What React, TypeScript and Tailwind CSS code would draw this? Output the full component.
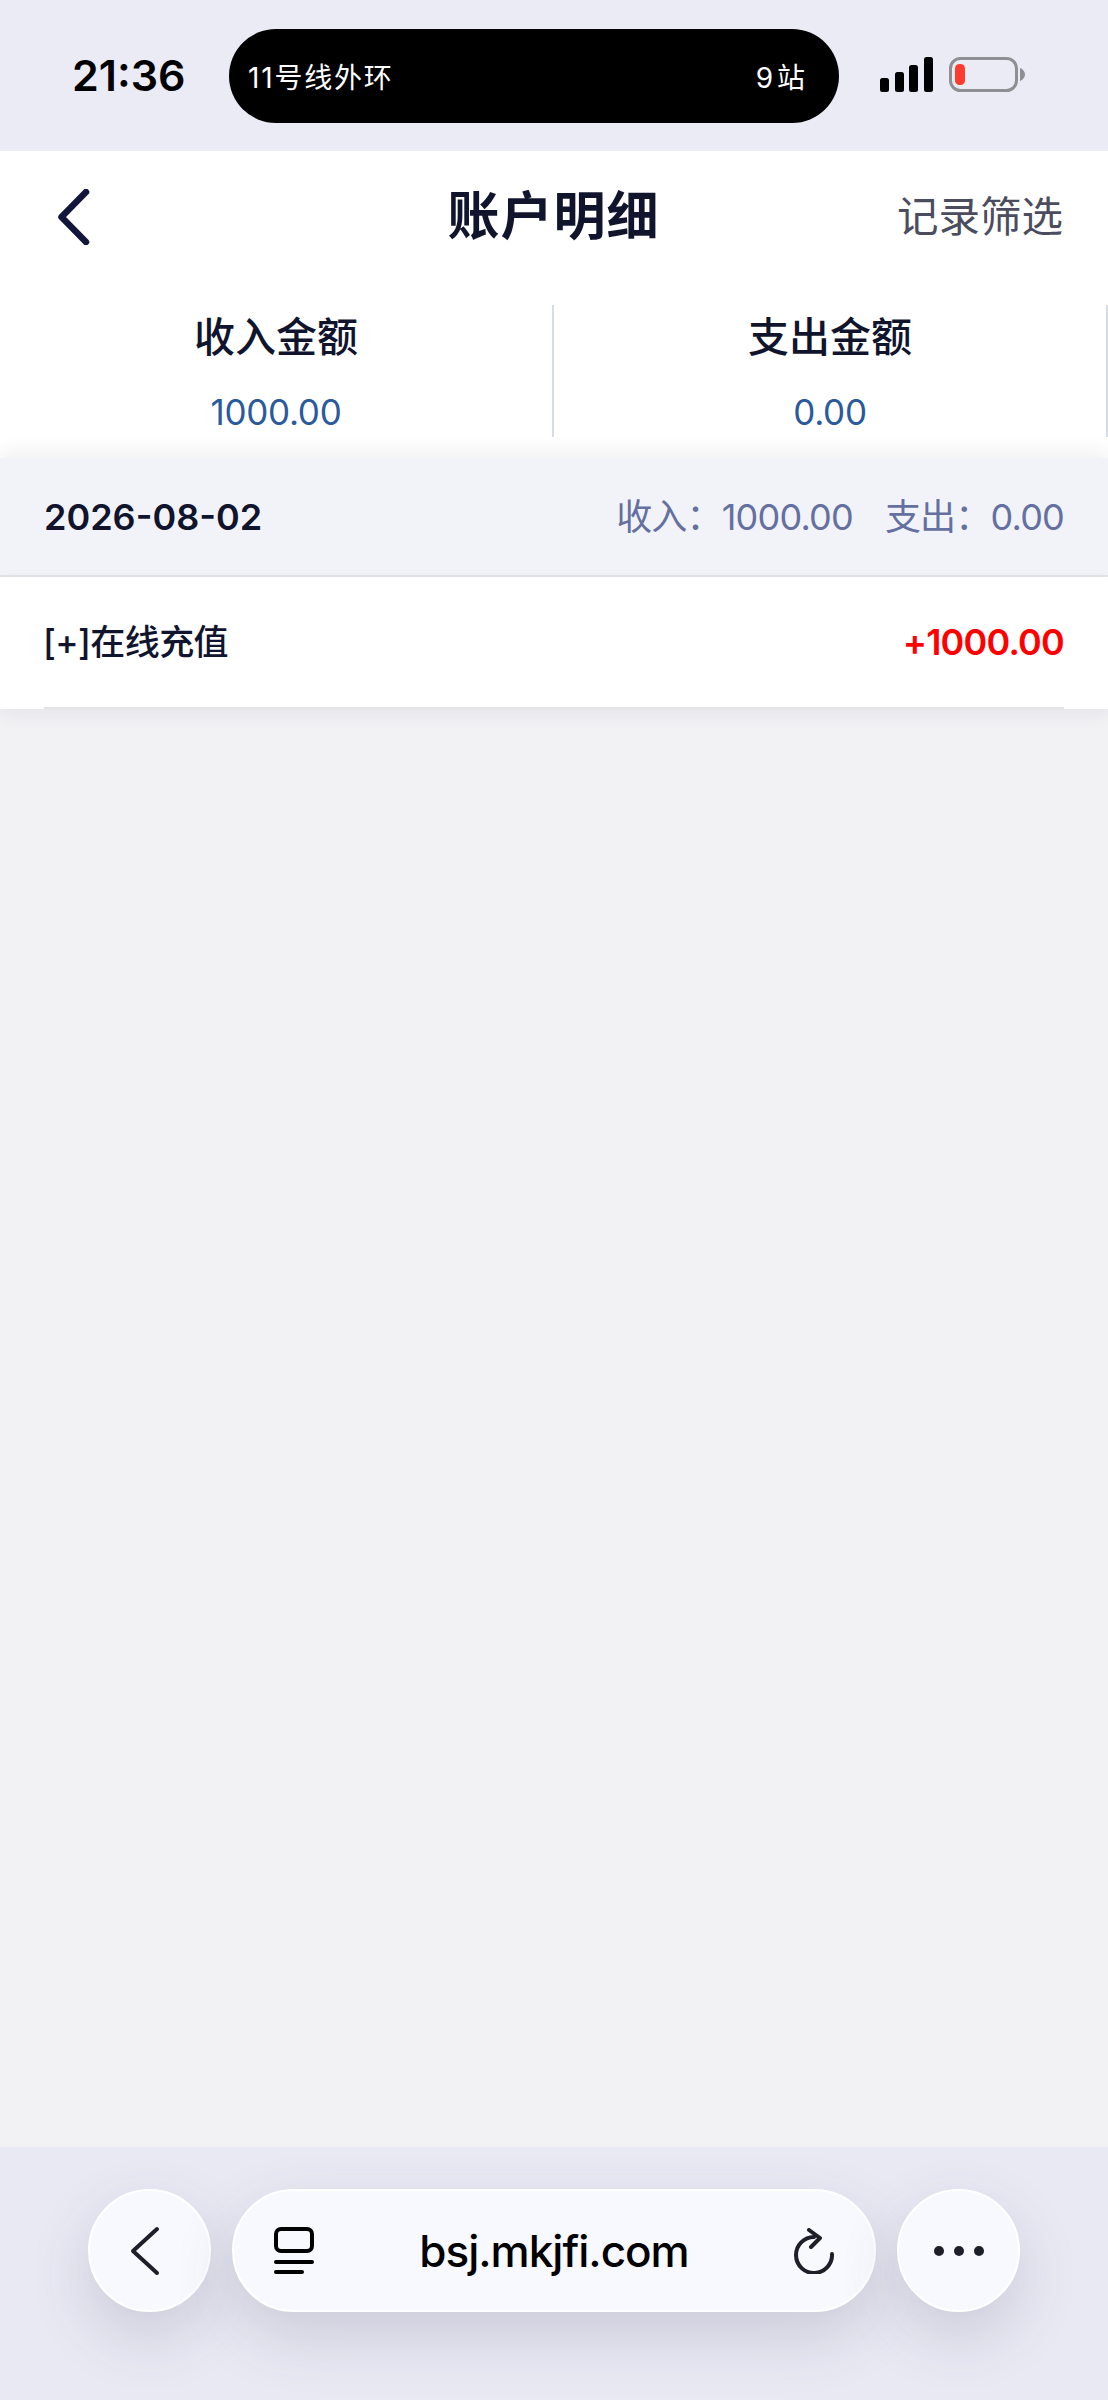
const font = "font-['Inter','Noto_Sans_CJK_SC',sans-serif]";

function StatusBar() {
  return (
    <div className="flex h-[151px] shrink-0 bg-[#eaebf5] pl-[72px] pt-[29px]">
      <span className="mt-[20px] h-[52px] w-[157px] text-[43px] font-semibold leading-[52px] text-black">21:36</span>
      <div className="flex h-[94px] w-[610px] items-center justify-between rounded-full bg-black pl-[19px] pr-[34px] text-[28px] leading-[34px] text-white">
        <span className="mt-[3px] tracking-[1.8px]">11号线外环</span>
        <span className="mt-[3px] [word-spacing:-4px]">9 站</span>
      </div>
      <svg className="ml-[41px] mt-[28px]" width="145" height="36" viewBox="0 0 145 36">
        <rect x="0" y="21" width="9" height="14" rx="2.5" fill="#000" />
        <rect x="15" y="15" width="9" height="20" rx="2.5" fill="#000" />
        <rect x="29" y="8" width="9" height="27" rx="2.5" fill="#000" />
        <rect x="44" y="0" width="9" height="35" rx="2.5" fill="#000" />
        <rect x="70.5" y="1.5" width="66" height="32" rx="10" fill="none" stroke="#8e8e93" strokeWidth="3" />
        <rect x="75" y="7" width="10" height="21" rx="4.5" fill="#ff3b30" />
        <path d="M140 11 C143 12 145 15 145 17.5 C145 20 143 23 140 24 Z" fill="#8e8e93" />
      </svg>
    </div>
  );
}

function Header() {
  return (
    <div className="grid h-[132px] grid-cols-[1fr_auto_1fr] items-center pl-[58px] pr-[45px]">
      <svg width="32" height="56" viewBox="0 0 32 56" fill="none">
        <path d="M28 3 L3.5 28 L28 53" stroke="#12163a" strokeWidth="6.5" strokeLinecap="round" strokeLinejoin="round" />
      </svg>
      <span className="ml-[-15px] mr-[-1px] text-[52px] font-bold leading-[60px] tracking-[1px] text-[#11142d]">账户明细</span>
      <span className="justify-self-end text-[41.5px] leading-[50px] text-[#4b4d5e]">记录筛选</span>
    </div>
  );
}

function Summary({ label, value }: { label: string; value: string }) {
  return (
    <div className="flex h-[132px] flex-col items-center border-r-2 border-[#d5dbe8]">
      <span className="mt-[7px] text-[41px] font-medium leading-[50px] text-[#11142d]">{label}</span>
      <span className="mt-[29px] text-[35px] leading-[42px] tracking-[-0.3px] text-[#2a5a9c]">{value}</span>
    </div>
  );
}

function Toolbar() {
  return (
    <div className="flex h-[253px] shrink-0 justify-center gap-[21px] bg-[#e8e9f3] pt-[42px]">
      <div className="flex h-[123px] w-[123px] items-center justify-center rounded-full border-2 border-white bg-[#f8f9fe] shadow-[0_24px_60px_rgba(70,70,100,0.18)]">
        <svg className="ml-[-9px]" width="30" height="50" viewBox="0 0 30 50" fill="none">
          <path d="M27 3 L3 25 L27 47" stroke="#1d1f2b" strokeWidth="4" strokeLinecap="round" strokeLinejoin="round" />
        </svg>
      </div>
      <div className="flex h-[123px] w-[644px] items-center justify-between rounded-full border-2 border-white bg-[#f8f9fe] pl-[40px] pr-[40px] shadow-[0_24px_60px_rgba(70,70,100,0.18)]">
        <svg width="40" height="48" viewBox="0 0 40 48" fill="none">
          <rect x="2" y="2" width="36" height="22" rx="5" stroke="#000" strokeWidth="4" />
          <path d="M2 35 H38 M2 45 H28" stroke="#000" strokeWidth="4" strokeLinecap="round" />
        </svg>
        <span className="text-[44px] font-medium leading-[54px] tracking-[-1px] text-black">bsj.mkjfi.com</span>
        <svg width="40" height="46" viewBox="0 0 40 46" fill="none">
          <path d="M20 9 A18 18 0 1 0 38 26" stroke="#1d1f2b" strokeWidth="4" strokeLinecap="round" />
          <path d="M15 2 L26 10 L17 19" stroke="#1d1f2b" strokeWidth="4" strokeLinecap="round" strokeLinejoin="round" />
        </svg>
      </div>
      <div className="flex h-[123px] w-[123px] items-center justify-center gap-[10px] rounded-full border-2 border-white bg-[#f8f9fe] shadow-[0_24px_60px_rgba(70,70,100,0.18)]">
        <span className="h-[10px] w-[10px] rounded-full bg-[#1d1f2b]" />
        <span className="h-[10px] w-[10px] rounded-full bg-[#1d1f2b]" />
        <span className="h-[10px] w-[10px] rounded-full bg-[#1d1f2b]" />
      </div>
    </div>
  );
}

export default function App() {
  return (
    <div className={`flex h-[2400px] w-[1108px] flex-col overflow-hidden bg-[#f2f2f5] ${font}`}>
      <StatusBar />
      <div className="bg-white pb-[21px]">
        <Header />
        <div className="mt-[22px] grid grid-cols-2">
          <Summary label="收入金额" value="1000.00" />
          <Summary label="支出金额" value="0.00" />
        </div>
      </div>
      <div className="relative flex-1">
        <div className="flex h-[119px] items-center justify-between border-b-2 border-[#e3e4e8] bg-[#f2f3f9] px-[44px] shadow-[0_-6px_18px_rgba(40,40,70,0.07)]">
          <span className="text-[36px] font-semibold leading-[44px] text-[#11142d]">2026-08-02</span>
          <div className="flex gap-[32px] text-[36px] leading-[44px] tracking-[-0.8px] text-[#6470a0]">
            <span>收入：1000.00</span>
            <span>支出：0.00</span>
          </div>
        </div>
        <div className="bg-white px-[44px] shadow-[0_6px_18px_rgba(40,40,70,0.06)]">
          <div className="flex h-[132px] items-center justify-between border-b-2 border-[#e3e4e6]">
            <span className="ml-[-1px] text-[35px] font-medium leading-[44px] tracking-[-0.6px] text-[#11142d]">[+]在线充值</span>
            <span className="text-[36px] font-semibold leading-[44px] tracking-[-0.8px] text-[#ff0000]">+1000.00</span>
          </div>
        </div>
      </div>
      <Toolbar />
    </div>
  );
}
